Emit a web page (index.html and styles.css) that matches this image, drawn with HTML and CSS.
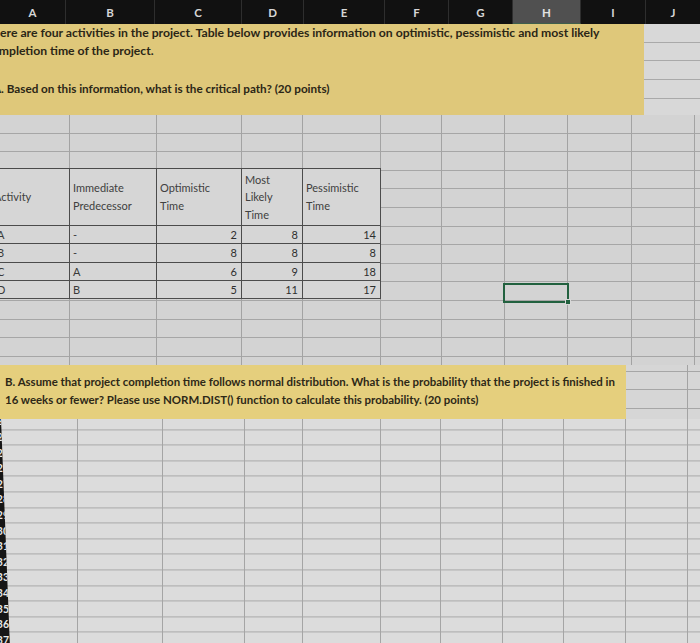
FILE: index.html
```html
<!DOCTYPE html>
<html>
<head>
<meta charset="utf-8">
<link rel="stylesheet" href="styles.css">
</head>
<body>
<div class="sheet">
  <div class="colhdr">
    <div class="ch w-a">A</div>
    <div class="ch w-b">B</div>
    <div class="ch w-c">C</div>
    <div class="ch w-d">D</div>
    <div class="ch w-e">E</div>
    <div class="ch w-f">F</div>
    <div class="ch w-g">G</div>
    <div class="ch w-h active">H</div>
    <div class="ch w-i">I</div>
    <div class="ch w-j">J</div>
  </div>

  <div class="top">
    <div class="band1">
      <p class="ln ln1">There are four activities in the project. Table below provides information on optimistic, pessimistic and most likely</p>
      <p class="ln ln2">completion time of the project.</p>
      <p class="ln ln3 gap">A. Based on this information, what is the critical path? (20 points)</p>
    </div>
    <div class="jcells"></div>
  </div>

  <div class="mid">
    <div class="ptable">
      <div class="tc hd act">Activity</div>
      <div class="tc hd">Immediate<br>Predecessor</div>
      <div class="tc hd">Optimistic<br>Time</div>
      <div class="tc hd">Most<br>Likely<br>Time</div>
      <div class="tc hd">Pessimistic<br>Time</div>

      <div class="tc act">A</div><div class="tc">-</div><div class="tc num">2</div><div class="tc num">8</div><div class="tc num">14</div>
      <div class="tc act">B</div><div class="tc">-</div><div class="tc num">8</div><div class="tc num">8</div><div class="tc num">8</div>
      <div class="tc act">C</div><div class="tc">A</div><div class="tc num">6</div><div class="tc num">9</div><div class="tc num">18</div>
      <div class="tc act">D</div><div class="tc">B</div><div class="tc num">5</div><div class="tc num">11</div><div class="tc num">17</div>
    </div>
    <div class="selcell"><span class="handle"></span></div>
  </div>

  <div class="row2">
    <div class="band2">
      <p class="ln2b">B. Assume that project completion time follows normal distribution. What is the probability that the project is finished in</p>
      <p class="ln2b">16 weeks or fewer? Please use NORM.DIST() function to calculate this probability. (20 points)</p>
    </div>
    <div class="rest2"></div>
  </div>

  <div class="lower">
    <div class="rowhdr">
      <span>23</span><span>24</span><span>25</span><span>26</span><span>27</span><span>28</span><span>29</span><span>30</span><span>31</span><span>32</span><span>33</span><span>34</span><span>35</span><span>36</span><span>37</span>
    </div>
  </div>
</div>
</body>
</html>
```

FILE: styles.css
```css
* { box-sizing: border-box; margin: 0; padding: 0; }
html, body { width: 700px; height: 643px; overflow: hidden; background: #d8d8d8; }
body { font-family: Lato, "Open Sans", sans-serif; }

.sheet { width: 700px; height: 643px; overflow: hidden; display: flex; flex-direction: column; }

/* column header */
.colhdr { display: flex; height: 24px; background: #111; flex: none; }
.ch { color: #d6d6d6; font-size: 11.5px; font-weight: 700; display: flex; align-items: center; justify-content: center; border-right: 1px solid #2e2e2e; padding-top: 1px; }
.ch.active { background: #505050; border-bottom: 1px solid #3f5f4c; color: #e2e2e2; }
.w-a { width: 66px; } .w-b { width: 89px; } .w-c { width: 87px; } .w-d { width: 62px; }
.w-e { width: 81px; } .w-f { width: 64px; } .w-g { width: 64px; } .w-h { width: 68px; }
.w-i { width: 65px; } .w-j { flex: 1; border-right: 0; }

/* top yellow band */
.top { display: flex; height: 91px; flex: none; }
.band1 { width: 644px; background: #dfc87a; overflow: hidden; }
.ln { font-size: 12.2px; font-weight: 700; color: #2b2616; height: 18.4px; line-height: 18.4px; white-space: nowrap; }
.ln1, .ln2 { margin-left: -14px; }
.ln3 { margin-left: -7px; font-size: 11.7px; }
.ln3.gap { margin-top: 18.4px; }
.jcells { flex: 1; background-color: #d8d8d8;
  background-image: repeating-linear-gradient(to bottom, transparent 0 17.7px, #a9a9a9 17.7px 18.7px); }

/* middle area */
.mid { position: relative; height: 250px; flex: none; padding-top: 53px; background-color: #d3d3d3;
  background-image:
    linear-gradient(to right, transparent 69px, #a3a3a3 69px 70px, transparent 70px 156px, #a3a3a3 156px 157px, transparent 157px 241px, #a3a3a3 241px 242px, transparent 242px 302px, #a3a3a3 302px 303px, transparent 303px 380px, #a3a3a3 380px 381px, transparent 381px 441px, #a3a3a3 441px 442px, transparent 442px 504px, #a3a3a3 504px 505px, transparent 505px 567px, #a3a3a3 567px 568px, transparent 568px 631px, #a3a3a3 631px 632px, transparent 632px 694px, #a3a3a3 694px 695px, transparent 695px),
    repeating-linear-gradient(to bottom, transparent 0 17.6px, #a6a6a6 17.6px 18.6px); }

.ptable { display: grid; width: 381px; grid-template-columns: 70px 87px 85px 61px 78px;
  grid-template-rows: 57px 18px 19px 18px 18px; background: #d6d6d6; border-top: 1px solid #4a4a4a; }
.tc { font-size: 11px; color: #3a3a3a; border-right: 1px solid #4c4c4c; border-bottom: 1px solid #4c4c4c;
  display: flex; align-items: center; padding-left: 3px; line-height: 17.5px; white-space: nowrap; overflow: hidden; }
.tc.hd { line-height: 17.6px; color: #404040; }
.tc.act { padding-left: 0; margin-left: -3px; }
.tc.hd.act { margin-left: -6px; }
.tc.num { justify-content: flex-end; padding-left: 0; padding-right: 4px; color: #2e2e2e; }

.selcell { position: absolute; left: 503px; top: 168px; width: 66px; height: 20px; border: 2px solid #22613f; }
.handle { position: absolute; right: -4px; bottom: -4px; width: 6px; height: 6px; background: #22613f; border: 1px solid #d8d8d8; }

/* second yellow band */
.row2 { display: flex; height: 54px; flex: none; background-color: #d6d6d6;
  background-image:
    linear-gradient(to right, transparent 687px, #a3a3a3 687px 688px, transparent 688px),
    repeating-linear-gradient(to bottom, transparent 0 6px, #a6a6a6 6px 7px, transparent 7px 18.3px); }
.band2 { width: 626px; background: #e5cf7d; padding: 8px 0 0 5px; overflow: hidden; }
.ln2b { font-size: 11.45px; font-weight: 700; color: #2d2817; line-height: 18px; height: 18px; white-space: nowrap; }
.rest2 { flex: 1; }

/* lower grid */
.lower { flex: 1; position: relative; background-color: #dcdcdc;
  background-image:
    linear-gradient(to right, transparent 77px, #a5a5a5 77px 78px, transparent 78px 162px, #a5a5a5 162px 163px, transparent 163px 244px, #a5a5a5 244px 245px, transparent 245px 302px, #a5a5a5 302px 303px, transparent 303px 380px, #a5a5a5 380px 381px, transparent 381px 440px, #a5a5a5 440px 441px, transparent 441px 502px, #a5a5a5 502px 503px, transparent 503px 563px, #a5a5a5 563px 564px, transparent 564px 625px, #a5a5a5 625px 626px, transparent 626px 687px, #a5a5a5 687px 688px, transparent 688px),
    repeating-linear-gradient(to bottom, transparent 0 14.6px, #a9a9a9 14.6px 15.6px);
  background-position: 0 0, 0 -4.6px; }
.rowhdr { width: 10px; height: 100%; background: #161616; clip-path: polygon(0 0, 1px 0, 10px 100%, 0 100%);
  display: flex; flex-direction: column; }
.rowhdr span { display: block; flex: none; height: 15.6px; line-height: 15.6px; font-size: 10.5px; font-weight: 700; color: #e8e8e8;
  text-align: right; padding-right: 1px; direction: rtl; overflow: hidden; white-space: nowrap; }
.rowhdr span:first-child { margin-top: -4.6px; }
```
